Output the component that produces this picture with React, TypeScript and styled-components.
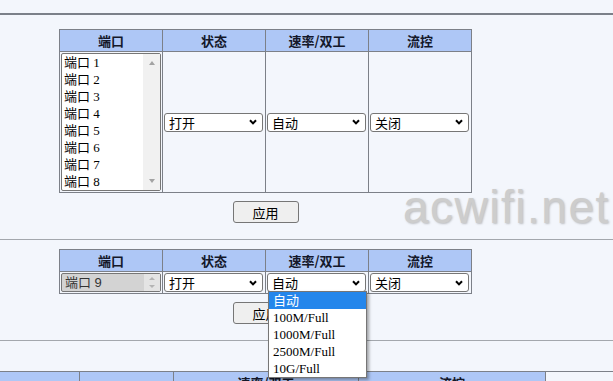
import React from 'react'
import styled, { createGlobalStyle } from 'styled-components'

const GlobalStyle = createGlobalStyle`
  html, body {
    margin: 0;
    padding: 0;
    background: #f3f6fc;
    overflow: hidden;
  }
  body {
    font-family: "Liberation Sans", "Noto Sans CJK SC", sans-serif;
    font-size: 13px;
    color: #000;
  }
`

const Page = styled.div`
  position: relative;
  padding-top: 13px;
  min-height: 381px;
`

const Rule = styled.hr<{ $heavy?: boolean }>`
  margin: 0;
  border: none;
  border-top: ${({ $heavy }) => ($heavy ? '2px solid #7b8089' : '1px solid #a3a7ad')};
`

const Section = styled.div<{ $top: number }>`
  display: flex;
  flex-direction: column;
  align-items: center;
  width: 413px;
  margin-left: 59px;
  padding: ${({ $top }) => $top}px 0 16px;
`

const Grid = styled.div<{ $cols: string }>`
  display: grid;
  grid-template-columns: ${({ $cols }) => $cols};
  border-top: 1px solid #7c8088;
  border-left: 1px solid #7c8088;
`

const HeadCell = styled.div<{ $rows?: number }>`
  grid-row: span ${({ $rows }) => $rows || 1};
  display: flex;
  align-items: center;
  justify-content: center;
  min-height: 21px;
  background: #aec7f6;
  border-right: 1px solid #7c8088;
  border-bottom: 1px solid #7c8088;
  font-family: "Noto Sans CJK SC", "Liberation Sans", sans-serif;
  font-weight: bold;
  font-size: 13px;
  color: #14182a;
`

const BodyCell = styled.div<{ $h: number }>`
  display: flex;
  align-items: center;
  height: ${({ $h }) => $h}px;
  padding-left: 1px;
  border-right: 1px solid #7c8088;
  border-bottom: 1px solid #7c8088;
`

const ListBox = styled.div`
  display: flex;
  width: 100px;
  height: 138px;
  box-sizing: border-box;
  border: 1px solid #767676;
  border-radius: 2px;
  background: #fff;
`

const ListItems = styled.div`
  flex: 1;
  padding-left: 2px;
`

const ListItem = styled.div`
  height: 17px;
  line-height: 17px;
  font-family: "Liberation Serif", "Noto Sans CJK SC", serif;
  font-size: 13px;
  white-space: pre;
`

const ScrollTrack = styled.div`
  display: flex;
  flex-direction: column;
  justify-content: space-between;
  align-items: center;
  width: 17px;
  padding: 7px 0;
  background: #f1f1f1;
`

const Arrow = styled.span<{ $down?: boolean; $size?: number; $color?: string }>`
  width: 0;
  height: 0;
  border-left: ${({ $size }) => ($size || 7) / 2}px solid transparent;
  border-right: ${({ $size }) => ($size || 7) / 2}px solid transparent;
  ${({ $down, $size, $color }) =>
    $down
      ? `border-top: ${Math.round(($size || 7) * 0.57)}px solid ${$color || '#a3a3a3'};`
      : `border-bottom: ${Math.round(($size || 7) * 0.57)}px solid ${$color || '#a3a3a3'};`}
`

const SelectBox = styled.div`
  position: relative;
  display: flex;
  align-items: center;
  justify-content: space-between;
  width: 99px;
  height: 19px;
  box-sizing: border-box;
  padding: 0 5px 0 4px;
  border: 1px solid #767676;
  border-radius: 3px;
  background: #fff;
  font-family: "Noto Sans CJK SC", "Liberation Sans", sans-serif;
  font-size: 13px;
  line-height: 17px;
`

const SpinBox = styled.div`
  display: flex;
  width: 100px;
  height: 19px;
  box-sizing: border-box;
  border: 1px solid #767676;
  border-radius: 2px;
  background: #d3d3d3;
`

const SpinText = styled.div`
  flex: 1;
  padding-left: 3px;
  line-height: 17px;
  font-size: 13px;
  color: #333;
  white-space: pre;
`

const SpinButtons = styled.div`
  display: flex;
  flex-direction: column;
  align-items: center;
  justify-content: center;
  gap: 5px;
  width: 16px;
  background: #e4e4e4;
`

const ApplyButton = styled.button`
  margin-top: 8px;
  width: 66px;
  height: 22px;
  box-sizing: border-box;
  padding: 0;
  border: 1px solid #767676;
  border-radius: 3px;
  background: #efefef;
  font-family: "Noto Sans CJK SC", "Liberation Sans", sans-serif;
  font-size: 13px;
  color: #000;
`

const Dropdown = styled.div`
  position: absolute;
  top: 17px;
  left: 0;
  z-index: 2;
  width: 99px;
  box-sizing: border-box;
  border: 1px solid #767676;
  background: #fff;
  box-shadow: 2px 2px 3px rgba(0, 0, 0, 0.35);
`

const Option = styled.div<{ $active?: boolean }>`
  height: 17px;
  line-height: 17px;
  padding-left: 4px;
  font-family: "Liberation Serif", "Noto Sans CJK SC", serif;
  font-size: 13px;
  background: ${({ $active }) => ($active ? '#2486eb' : 'transparent')};
  color: ${({ $active }) => ($active ? '#fff' : '#000')};
`

const BottomTable = styled.div`
  margin: 30px 0 0 -1px;
`

const Watermark = styled.div`
  position: absolute;
  left: 403px;
  top: 184px;
  font-family: "Liberation Sans", Arial, sans-serif;
  font-size: 46px;
  line-height: 46px;
  letter-spacing: 1.5px;
  color: #cdcdcd;
  text-shadow: 1px 1px 2px rgba(90, 90, 90, 0.35);
  pointer-events: none;
`

const Chevron = () => (
  <svg width="8" height="6" viewBox="0 0 8 6">
    <path d="M1 1.2 L4 4.4 L7 1.2" fill="none" stroke="#000" strokeWidth="2" />
  </svg>
)

function Select({ value, children }: { value: string; children?: React.ReactNode }) {
  return (
    <SelectBox>
      <span>{value}</span>
      <Chevron />
      {children}
    </SelectBox>
  )
}

const headers = ['端口', '状态', '速率/双工', '流控']
const speeds = ['自动', '100M/Full', '1000M/Full', '2500M/Full', '10G/Full']
const ports = [1, 2, 3, 4, 5, 6, 7, 8]

export default function App() {
  return (
    <Page>
      <GlobalStyle />
      <Rule $heavy />

      <Section $top={14}>
        <Grid $cols="repeat(4, 103px)">
          {headers.map(h => (
            <HeadCell key={h}>{h}</HeadCell>
          ))}
          <BodyCell $h={140}>
            <ListBox>
              <ListItems>
                {ports.map(p => (
                  <ListItem key={p}>{`端口 ${p}`}</ListItem>
                ))}
              </ListItems>
              <ScrollTrack>
                <Arrow />
                <Arrow $down />
              </ScrollTrack>
            </ListBox>
          </BodyCell>
          <BodyCell $h={140}>
            <Select value="打开" />
          </BodyCell>
          <BodyCell $h={140}>
            <Select value="自动" />
          </BodyCell>
          <BodyCell $h={140}>
            <Select value="关闭" />
          </BodyCell>
        </Grid>
        <ApplyButton>应用</ApplyButton>
      </Section>

      <Rule />

      <Section $top={9}>
        <Grid $cols="repeat(4, 103px)">
          {headers.map(h => (
            <HeadCell key={h}>{h}</HeadCell>
          ))}
          <BodyCell $h={21}>
            <SpinBox>
              <SpinText>{'端口 9'}</SpinText>
              <SpinButtons>
                <Arrow $size={6} $color="#b4b4b4" />
                <Arrow $size={6} $color="#b4b4b4" $down />
              </SpinButtons>
            </SpinBox>
          </BodyCell>
          <BodyCell $h={21}>
            <Select value="打开" />
          </BodyCell>
          <BodyCell $h={21}>
            <Select value="自动">
              <Dropdown>
                {speeds.map((s, i) => (
                  <Option key={s} $active={i === 0}>
                    {s}
                  </Option>
                ))}
              </Dropdown>
            </Select>
          </BodyCell>
          <BodyCell $h={21}>
            <Select value="关闭" />
          </BodyCell>
        </Grid>
        <ApplyButton>应用</ApplyButton>
      </Section>

      <Rule />

      <BottomTable>
        <Grid $cols="80px 94px 185px 187px">
          <HeadCell $rows={2}>端口</HeadCell>
          <HeadCell $rows={2}>状态</HeadCell>
          <HeadCell>速率/双工</HeadCell>
          <HeadCell>流控</HeadCell>
          <HeadCell />
          <HeadCell />
        </Grid>
      </BottomTable>

      <Watermark>acwifi.net</Watermark>
    </Page>
  )
}
